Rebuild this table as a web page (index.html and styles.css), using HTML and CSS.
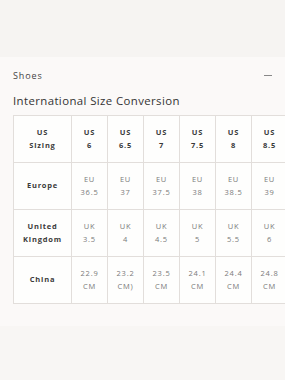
FILE: index.html
```html
<!DOCTYPE html>
<html>
<head>
<meta charset="utf-8">
<link rel="stylesheet" href="styles.css">
</head>
<body>
<div class="top"></div>
<section class="panel">
  <div class="acc-head">
    <span class="acc-title">Shoes</span>
    <span class="acc-minus"></span>
  </div>
  <h2 class="heading">International Size Conversion</h2>
  <div class="table-wrap">
    <table class="sizes">
      <colgroup>
        <col class="c-label"><col class="c-val"><col class="c-val"><col class="c-val"><col class="c-val"><col class="c-val"><col class="c-val">
      </colgroup>
      <tr>
        <th>US<br>Sizing</th>
        <th>US<br>6</th><th>US<br>6.5</th><th>US<br>7</th><th>US<br>7.5</th><th>US<br>8</th><th>US<br>8.5</th>
      </tr>
      <tr>
        <th>Europe</th>
        <td>EU<br>36.5</td><td>EU<br>37</td><td>EU<br>37.5</td><td>EU<br>38</td><td>EU<br>38.5</td><td>EU<br>39</td>
      </tr>
      <tr>
        <th>United<br>Kingdom</th>
        <td>UK<br>3.5</td><td>UK<br>4</td><td>UK<br>4.5</td><td>UK<br>5</td><td>UK<br>5.5</td><td>UK<br>6</td>
      </tr>
      <tr>
        <th>China</th>
        <td>22.9<br>CM</td><td>23.2<br>CM)</td><td>23.5<br>CM</td><td>24.1<br>CM</td><td>24.4<br>CM</td><td>24.8<br>CM</td>
      </tr>
    </table>
  </div>
</section>
<div class="bottom"></div>
</body>
</html>
```

FILE: styles.css
```css
html, body {
  margin: 0;
  padding: 0;
  background: #fbf9f8;
  overflow: hidden;
}
body {
  width: 285px;
  height: 380px;
  font-family: "Open Sans", "Liberation Sans", sans-serif;
  color: #333;
}
.top {
  height: 57px;
  background: #f6f4f2;
}
.panel {
  padding: 0 0 0 13px;
}
.acc-head {
  display: flex;
  justify-content: space-between;
  align-items: center;
  height: 36px;
  padding-right: 13px;
}
.acc-title {
  font-size: 9px;
  letter-spacing: 0.9px;
  color: #444;
}
.acc-minus {
  width: 8px;
  height: 1px;
  background: #888;
}
.heading {
  margin: 0;
  font-weight: 400;
  font-size: 11.4px;
  letter-spacing: 0.4px;
  line-height: 16px;
  color: #333;
  height: 22px;
}
.table-wrap {
  width: 272px;
  overflow: hidden;
}
.sizes {
  border-collapse: collapse;
  table-layout: fixed;
  width: 275px;
  background: #fefefd;
}
.c-label {
  width: 58px;
}
.c-val {
  width: 36px;
}
.sizes th, .sizes td {
  border: 1px solid #e2dedb;
  text-align: center;
  vertical-align: middle;
  font-size: 7.5px;
  line-height: 13.5px;
  letter-spacing: 0.8px;
  padding: 9px 0;
  height: 28px;
}
.sizes th {
  font-weight: 700;
  color: #3a3a3a;
}
.sizes td {
  font-weight: 400;
  color: #7a7a7a;
}
.bottom {
  margin-top: 22px;
  height: 70px;
  background: #f8f6f4;
}
```
